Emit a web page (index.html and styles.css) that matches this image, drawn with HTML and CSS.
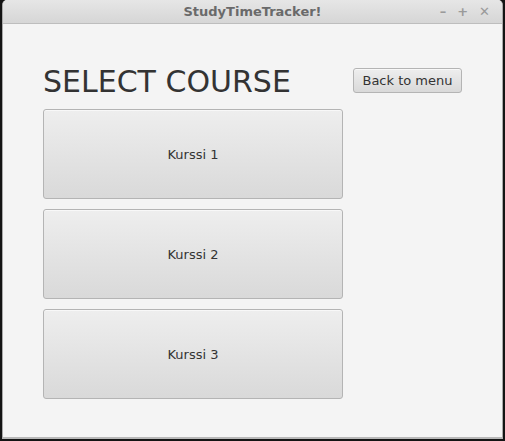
FILE: index.html
```html
<!DOCTYPE html>
<html>
<head>
<meta charset="utf-8">
<link rel="stylesheet" href="styles.css">
</head>
<body>
<div class="window">
  <div class="titlebar">
    <span class="title">StudyTimeTracker!</span>
    <div class="controls">
      <span class="ctl">&#8211;</span>
      <span class="ctl">+</span>
      <span class="ctl">&#10005;</span>
    </div>
  </div>
  <div class="content">
    <div class="header">
      <h1 class="heading">SELECT COURSE</h1>
      <button class="btn back">Back to menu</button>
    </div>
    <div class="courses">
      <button class="btn course">Kurssi 1</button>
      <button class="btn course">Kurssi 2</button>
      <button class="btn course">Kurssi 3</button>
    </div>
  </div>
</div>
</body>
</html>
```
FILE: styles.css
```css
html, body {
  margin: 0;
  padding: 0;
  height: 100%;
  background: #141414;
  font-family: "DejaVu Sans", sans-serif;
}
body {
  padding: 0 2px 0 2px;
  box-sizing: border-box;
  height: 441px;
  overflow: hidden;
}
.window {
  height: 439px;
  box-sizing: border-box;
  border: 1px solid #a8a8a8;
  border-top: none;
  border-bottom: 2px solid #b8b8b8;
  border-radius: 5px 5px 0 0;
  background: #f4f4f4;
  display: flex;
  flex-direction: column;
  overflow: hidden;
}
.titlebar {
  height: 23px;
  flex: none;
  position: relative;
  background: linear-gradient(#e6e6e6, #d6d6d6);
  border-bottom: 1px solid #bdbdbd;
  display: flex;
  align-items: center;
  justify-content: center;
}
.title {
  font-weight: bold;
  font-size: 13px;
  color: #6a6a6a;
}
.controls {
  position: absolute;
  right: 12px;
  top: 0;
  height: 23px;
  display: flex;
  align-items: center;
  gap: 11px;
  color: #9a9a9a;
  font-weight: bold;
  font-size: 13px;
}
.content {
  padding: 40px 0 0 40px;
}
.header {
  display: flex;
  align-items: flex-start;
  width: 419px;
  justify-content: space-between;
  height: 36px;
  margin-bottom: 9px;
}
.heading {
  margin: 0;
  font-weight: normal;
  font-size: 30px;
  color: #333333;
  letter-spacing: 0;
}
.btn {
  font-family: "DejaVu Sans", sans-serif;
  font-size: 13px;
  color: #333333;
  border: 1px solid #b4b4b4;
  border-radius: 3px;
  background: linear-gradient(#eeeeee, #d9d9d9);
  box-shadow: inset 0 1px 0 #f8f8f8;
  padding: 0;
  margin: 0;
}
.back {
  width: 109px;
  height: 25px;
  margin-top: 4px;
}
.courses {
  display: flex;
  flex-direction: column;
  gap: 10px;
}
.course {
  width: 300px;
  height: 90px;
}
```
